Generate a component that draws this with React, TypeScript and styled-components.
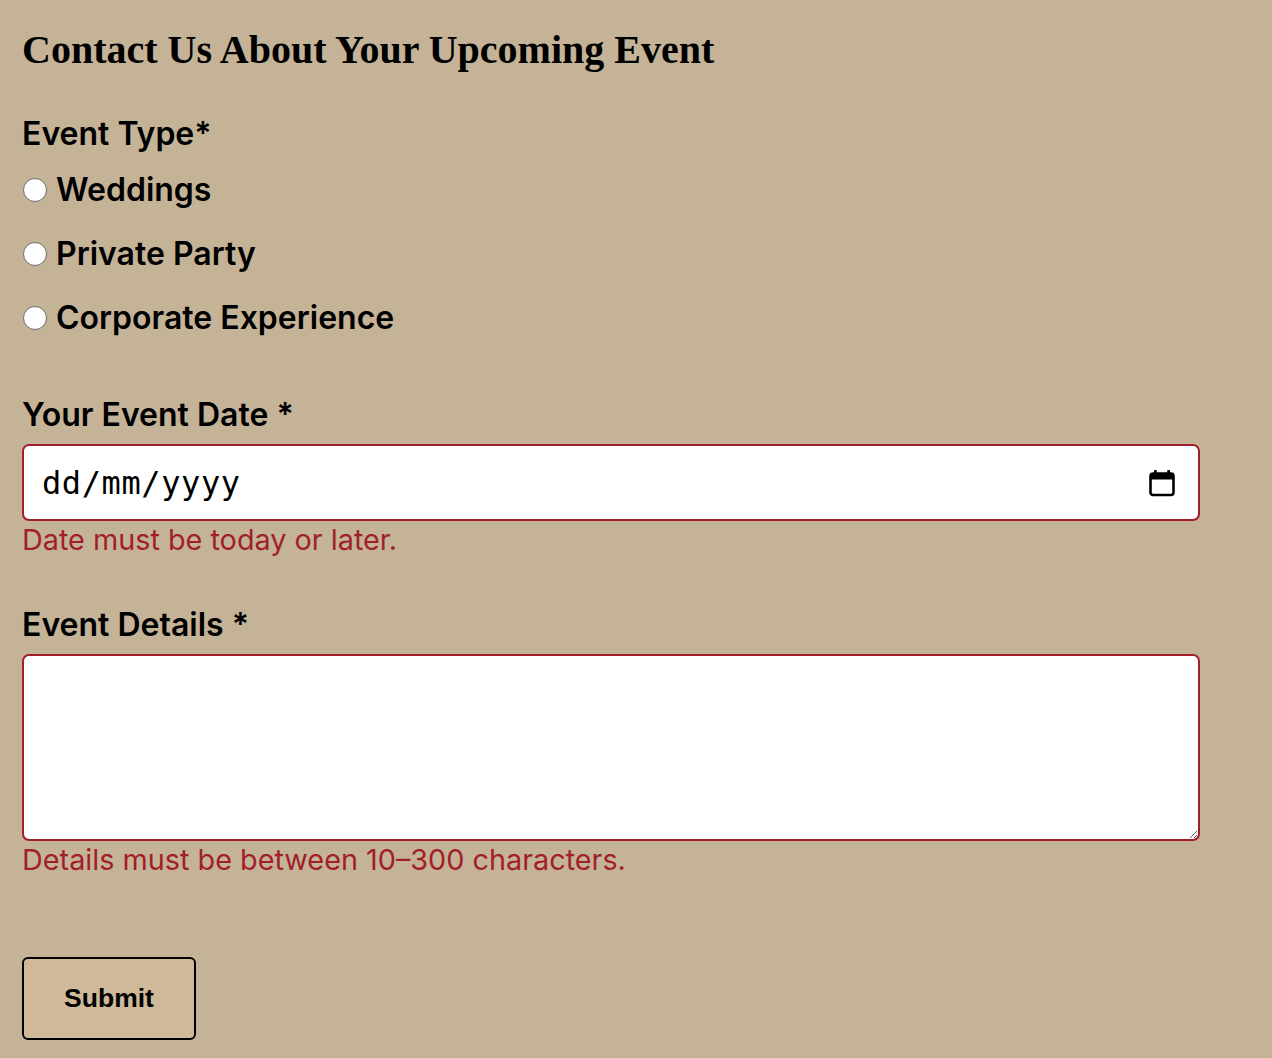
import * as React from 'react';
import styled, { createGlobalStyle } from 'styled-components';

const red = '#a11f2b';

const GlobalStyle = createGlobalStyle`
  html, body {
    margin: 0;
    padding: 0;
    background: #c5b397;
  }
  body {
    font-family: Inter, "Noto Sans", sans-serif;
    color: #000;
  }
`;

const Page = styled.main`
  padding: 24px 22px 18px 22px;
  width: 1178px;
`;

const Title = styled.h1`
  margin: 0 0 39px 0;
  font-family: "Liberation Serif", "DejaVu Serif", serif;
  font-weight: 700;
  font-size: 40px;
  line-height: 52px;
  letter-spacing: 0;
`;

const Form = styled.form`
  display: flex;
  flex-direction: column;
`;

const Fieldset = styled.fieldset`
  border: none;
  margin: 0 0 61px 0;
  padding: 0;
  display: flex;
  flex-direction: column;
  gap: 30px;
`;

const Legend = styled.legend`
  padding: 0;
  margin-bottom: 20px;
  font-size: 32px;
  font-weight: 600;
  line-height: 38px;
`;

const Option = styled.label`
  display: flex;
  align-items: center;
  gap: 9px;
  font-size: 32px;
  font-weight: 600;
  line-height: 34px;
  cursor: pointer;
`;

const Radio = styled.input`
  appearance: none;
  margin: 0 0 0 1px;
  width: 24px;
  height: 24px;
  border-radius: 50%;
  border: 1.5px solid #6b6b6b;
  background: #fff;
  flex-shrink: 0;
`;

const FieldLabel = styled.label`
  display: block;
  font-size: 32px;
  font-weight: 600;
  line-height: 38px;
  margin-bottom: 10px;
`;

const Field = styled.div<{ $last?: boolean }>`
  display: flex;
  flex-direction: column;
  margin-bottom: ${({ $last }) => ($last ? '79px' : '48px')};
`;

const DateBox = styled.div`
  display: flex;
  align-items: center;
  height: 77px;
  box-sizing: border-box;
  border: 2px solid ${red};
  border-radius: 7px;
  background: #fff;
  padding: 0 23px 0 18px;
`;

const DateInput = styled.input`
  flex: 1;
  border: none;
  outline: none;
  background: transparent;
  padding: 0;
  font-family: "DejaVu Sans Mono", "Liberation Mono", monospace;
  font-size: 32px;
  letter-spacing: 0.6px;
  color: #000;
  &::placeholder {
    color: #000;
    opacity: 1;
  }
`;

const TextArea = styled.textarea`
  height: 187px;
  box-sizing: border-box;
  border: 2px solid ${red};
  border-radius: 7px;
  background: #fff;
  resize: vertical;
  padding: 12px 18px;
  font-family: Inter, sans-serif;
  font-size: 24px;
  outline: none;
`;

const ErrorText = styled.div`
  color: ${red};
  font-size: 28.8px;
  line-height: 36px;
  margin-top: 1px;
`;

const SubmitButton = styled.button`
  align-self: flex-start;
  width: 174px;
  height: 83px;
  background: #cfb999;
  border: 2px solid #000;
  border-radius: 6px;
  font-family: "Liberation Sans", Arial, sans-serif;
  font-weight: 700;
  font-size: 26.5px;
  color: #000;
  cursor: pointer;
`;

const CalendarIcon = () => (
  <svg width="26" height="28" viewBox="0 0 26 28" aria-hidden="true">
    <rect x="1.5" y="4.5" width="23" height="21.5" rx="2.5" fill="none" stroke="#000" strokeWidth="2.6" />
    <rect x="1.5" y="4.5" width="23" height="6" fill="#000" />
    <rect x="5" y="1" width="2.8" height="5" rx="1" fill="#000" />
    <rect x="18.2" y="1" width="2.8" height="5" rx="1" fill="#000" />
  </svg>
);

const eventTypes = ['Weddings', 'Private Party', 'Corporate Experience'];

export default function App() {
  return (
    <>
      <GlobalStyle />
      <Page>
        <Title>Contact Us About Your Upcoming Event</Title>
        <Form onSubmit={(e) => e.preventDefault()}>
          <Fieldset>
            <Legend>Event Type*</Legend>
            {eventTypes.map((t) => (
              <Option key={t}>
                <Radio type="radio" name="eventType" value={t} />
                {t}
              </Option>
            ))}
          </Fieldset>

          <Field>
            <FieldLabel htmlFor="event-date">Your Event Date *</FieldLabel>
            <DateBox>
              <DateInput id="event-date" type="text" placeholder="dd/mm/yyyy" />
              <CalendarIcon />
            </DateBox>
            <ErrorText>Date must be today or later.</ErrorText>
          </Field>

          <Field $last>
            <FieldLabel htmlFor="event-details">Event Details *</FieldLabel>
            <TextArea id="event-details" />
            <ErrorText>Details must be between 10–300 characters.</ErrorText>
          </Field>

          <SubmitButton type="submit">Submit</SubmitButton>
        </Form>
      </Page>
    </>
  );
}
